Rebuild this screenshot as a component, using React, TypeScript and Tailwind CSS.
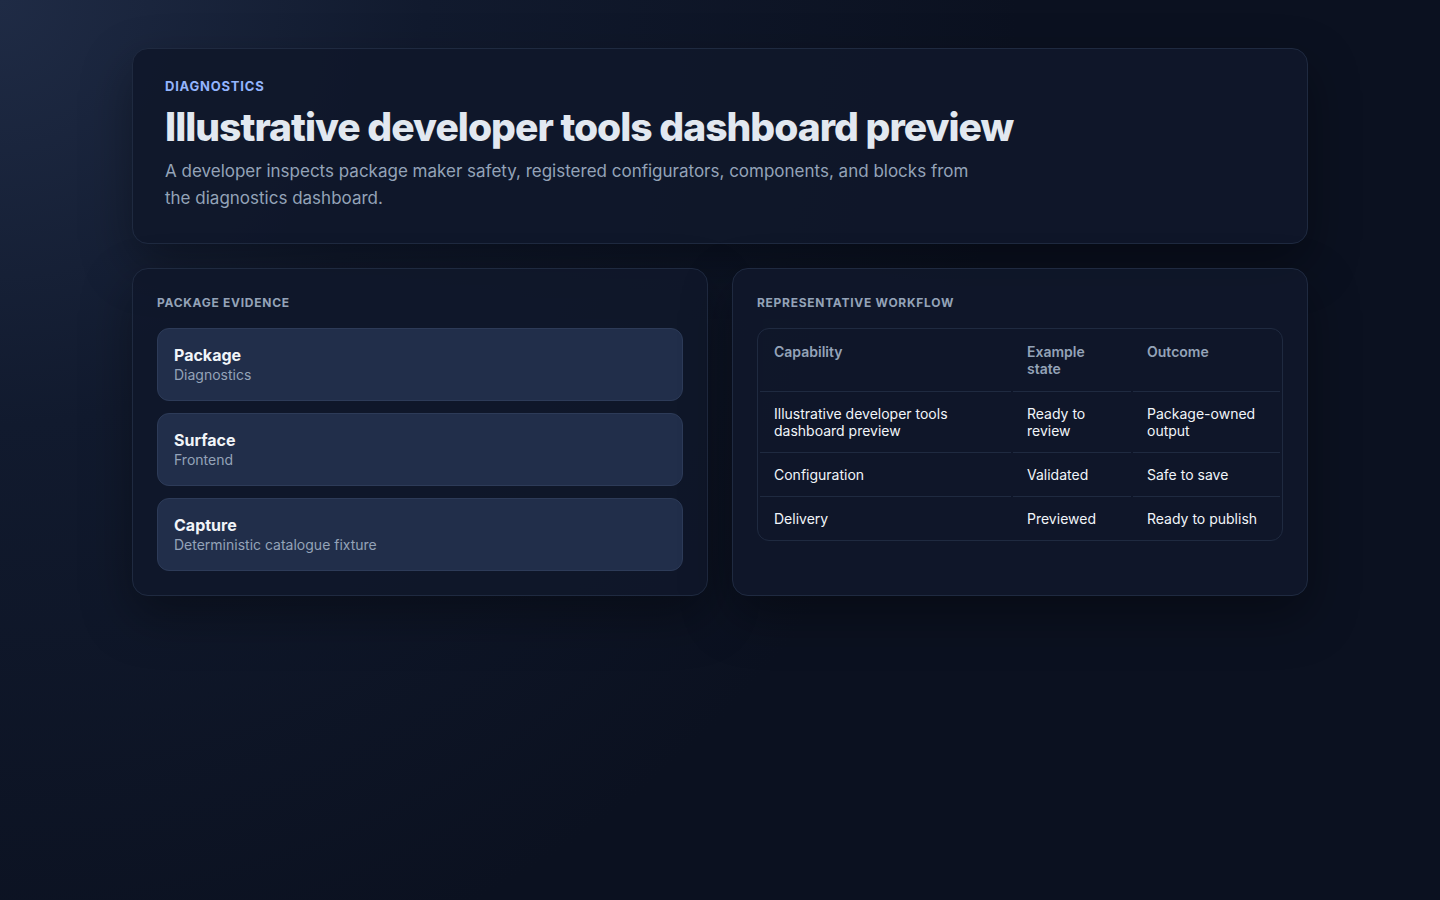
import React from "react";

const rows = [
  ["Illustrative developer tools dashboard preview", "Ready to review", "Package-owned output"],
  ["Configuration", "Validated", "Safe to save"],
  ["Delivery", "Previewed", "Ready to publish"],
];

export default function App() {
  return (
    <div
      className="min-h-[900px] w-full bg-[#0b1120] bg-[radial-gradient(circle_at_0%_0%,#1f2b45_0%,#111a2e_25%,#0b1120_60%)] text-[#e2e8f0]"
      style={{ fontFamily: "Inter, 'Noto Sans', sans-serif" }}
    >
      <div className="mx-auto w-[1176px] pt-12">
        <section className="rounded-2xl border border-[#1f2a40] bg-[#0f172a]/90 px-8 pt-[29px] pb-[31px] shadow-[0_20px_50px_rgba(0,0,0,0.35)]">
          <div className="text-[13px] font-bold tracking-[0.06em] text-[#93b4fd] leading-[16px]">DIAGNOSTICS</div>
          <h1 className="mt-[9px] text-[39px] font-extrabold leading-[48px] tracking-[-0.025em] text-[#e2e8f0]">
            Illustrative developer tools dashboard preview
          </h1>
          <p className="mt-[7px] max-w-[820px] text-[17px] leading-[27px] text-[#94a3b8]">
            A developer inspects package maker safety, registered configurators, components, and blocks from the diagnostics dashboard.
          </p>
        </section>

        <div className="mt-6 grid grid-cols-2 gap-6">
          <section className="rounded-2xl border border-[#1f2a40] bg-[#0f172a]/90 p-6 shadow-[0_20px_50px_rgba(0,0,0,0.35)]">
            <div className="text-[12px] font-bold tracking-[0.06em] text-[#94a3b8] leading-[20px]">PACKAGE EVIDENCE</div>
            <div className="mt-[15px] flex flex-col gap-3">
              {[
                ["Package", "Diagnostics"],
                ["Surface", "Frontend"],
                ["Capture", "Deterministic catalogue fixture"],
              ].map(([t, s]) => (
                <div key={t} className="rounded-xl border border-[#2d3b58] bg-[#212e4a] px-4 py-4">
                  <div className="text-[16px] font-bold leading-[20px] text-[#f1f5f9]">{t}</div>
                  <div className="text-[14px] leading-[19px] text-[#94a3b8]">{s}</div>
                </div>
              ))}
            </div>
          </section>

          <section className="rounded-2xl border border-[#1f2a40] bg-[#0f172a]/90 p-6 shadow-[0_20px_50px_rgba(0,0,0,0.35)]">
            <div className="text-[12px] font-bold tracking-[0.06em] text-[#94a3b8] leading-[20px]">REPRESENTATIVE WORKFLOW</div>
            <div className="mt-[15px] overflow-hidden rounded-xl border border-[#1f2a40]">
              <table className="w-full border-separate border-spacing-x-[2px] border-spacing-y-0 text-left text-[14px] leading-[17px]">
                <thead>
                  <tr>
                    <th className="w-[251px] border-b border-[#1f2a40] px-[14px] py-[14px] align-top font-semibold text-[#94a3b8]">Capability</th>
                    <th className="w-[118px] border-b border-[#1f2a40] px-[14px] py-[14px] align-top font-semibold text-[#94a3b8]">Example state</th>
                    <th className="border-b border-[#1f2a40] px-[14px] py-[14px] align-top font-semibold text-[#94a3b8]">Outcome</th>
                  </tr>
                </thead>
                <tbody>
                  {rows.map((r, i) => (
                    <tr key={i}>
                      {r.map((c, j) => (
                        <td
                          key={j}
                          className={`px-[14px] py-[13px] align-top text-[#f1f5f9] ${i < rows.length - 1 ? "border-b border-[#1f2a40]" : ""}`}
                        >
                          {c}
                        </td>
                      ))}
                    </tr>
                  ))}
                </tbody>
              </table>
            </div>
          </section>
        </div>
      </div>
    </div>
  );
}
